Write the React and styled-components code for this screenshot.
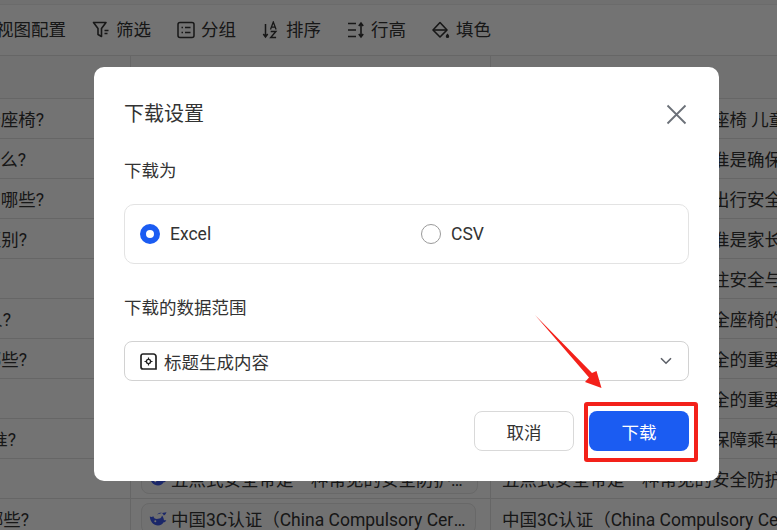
import React from "react";
import styled, { createGlobalStyle } from "styled-components";

const Global = createGlobalStyle`
  html, body { margin: 0; padding: 0; height: 100%; background: #fff; overflow: hidden; }
  body { font-family: Roboto, "Noto Sans CJK SC", sans-serif; color: #333; }
  * { box-sizing: border-box; }
`;

const Page = styled.div`
  position: relative;
  width: 777px;
  height: 530px;
  overflow: hidden;
  background: #f8f8f8;
  font-size: 17.5px;
`;

const Toolbar = styled.div`
  display: flex;
  align-items: center;
  gap: 25.5px;
  height: 52px;
  margin-left: -4px;
  position: relative;
  top: 4px;
  background: #fff;
  border-top: 1px solid #eee;
  border-bottom: 1px solid #e2e2e2;
`;

const ToolItem = styled.div`
  display: flex;
  align-items: center;
  gap: 6.5px;
  white-space: nowrap;
  line-height: 24px;
  color: #333;
`;

const HeaderRow = styled.div`
  display: grid;
  grid-template-columns: 131px 360px 1fr;
  height: 43px;
  margin-top: 4px;
  background: #fafafa;
  border-bottom: 1px solid #e2e2e2;
`;

const Row = styled.div`
  display: grid;
  grid-template-columns: 131px 360px 1fr;
  height: 40px;
  background: #fff;
  border-bottom: 1px solid #e2e2e2;
`;

const LeadCell = styled.div`
  display: flex;
  align-items: center;
  justify-content: flex-end;
  overflow: hidden;
  white-space: nowrap;
  border-right: 1px solid #e2e2e2;
  padding-right: ${(p) => p.$inset}px;
`;

const HeadCell = styled.div`
  border-right: 1px solid #e2e2e2;
`;

const ChipCell = styled.div`
  padding: 4px 12px 0 10px;
  border-right: 1px solid #e2e2e2;
  min-width: 0;
`;

const Chip = styled.div`
  display: flex;
  align-items: center;
  gap: 4px;
  height: 31px;
  padding: 0 7px 0 7px;
  border: 1px solid #e6e6e6;
  border-radius: 8px;
  background: #fafafa;
  width: ${(p) => p.$w}px;
`;

const ChipText = styled.span`
  flex: 1;
  min-width: 0;
  overflow: hidden;
  white-space: nowrap;
  text-overflow: ellipsis;
`;

const TextCell = styled.div`
  display: flex;
  align-items: center;
  overflow: hidden;
  white-space: nowrap;
  padding-left: 11px;
`;

const Overlay = styled.div`
  position: absolute;
  inset: 0;
  background: rgba(0, 0, 0, 0.55);
`;

const Dialog = styled.div`
  position: absolute;
  left: 94px;
  top: 67px;
  width: 625px;
  height: 414px;
  background: #fff;
  border-radius: 10px;
  padding: 33px 30px 30px;
  display: flex;
  flex-direction: column;
  color: #333;
`;

const DialogHead = styled.div`
  display: flex;
  align-items: center;
  justify-content: space-between;
  height: 28px;
  padding-right: 32px;
`;

const Title = styled.div`
  font-size: 20px;
  line-height: 28px;
`;

const CloseBtn = styled.button`
  all: unset;
  display: flex;
  width: 21px;
  height: 21px;
  margin-right: -30px;
  color: #6b7078;
`;

const Label = styled.div`
  font-size: 17.5px;
  line-height: 24px;
  margin-top: ${(p) => p.$top}px;
`;

const RadioCard = styled.div`
  margin-top: 21px;
  height: 60px;
  border: 1px solid #e3e3e3;
  border-radius: 10px;
  display: grid;
  grid-template-columns: 281px 1fr;
  align-items: center;
  padding-left: 15px;
`;

const RadioOption = styled.label`
  display: flex;
  align-items: center;
  gap: 10px;
`;

const RadioDot = styled.span`
  width: 20px;
  height: 20px;
  border-radius: 50%;
  background: #fff;
  border: ${(p) => (p.$on ? "6px solid #1b5cf2" : "1px solid #9a9a9a")};
`;

const SelectBox = styled.div`
  margin-top: 21px;
  height: 40px;
  border: 1px solid #d2d2d2;
  border-radius: 8px;
  display: flex;
  align-items: center;
  gap: 7px;
  padding: 0 15px;
`;

const SelectText = styled.span`
  flex: 1;
`;

const Actions = styled.div`
  margin-top: 30px;
  display: flex;
  justify-content: flex-end;
  gap: 15px;
`;

const CancelBtn = styled.button`
  width: 100px;
  height: 40px;
  border-radius: 8px;
  border: 1px solid #d9d9d9;
  background: #fff;
  color: #333;
  font: inherit;
  font-size: 17.5px;
`;

const PrimaryWrap = styled.div`
  position: relative;
`;

const PrimaryBtn = styled.button`
  display: block;
  width: 100px;
  height: 40px;
  border-radius: 8px;
  border: none;
  background: #1b5cf2;
  color: #fff;
  font: inherit;
  font-size: 17.5px;
`;

const RedFrame = styled.div`
  position: absolute;
  left: -5px;
  right: -9px;
  top: -9px;
  bottom: -11px;
  border: 4px solid #f3211a;
  border-radius: 3px;
`;

const Arrow = styled.svg`
  position: absolute;
  left: 436px;
  top: 244px;
`;

const FilterIcon = () => (
  <svg width="18" height="18" viewBox="0 0 18 18" fill="none" stroke="currentColor" strokeWidth="1.6">
    <path d="M1.5 1.5h12.5L9.5 7.5V15.5L6 13.5V7.5z" strokeLinejoin="round" />
    <path d="M12.5 9.5h4M12.5 12.5h3" />
  </svg>
);
const GroupIcon = () => (
  <svg width="18" height="18" viewBox="0 0 18 18" fill="none" stroke="currentColor" strokeWidth="1.5">
    <rect x="1" y="1.5" width="16" height="15" rx="2" />
    <path d="M4.5 6.5h1.5M4.5 11.5h1.5M8 6.5h5.5M8 11.5h5.5" />
  </svg>
);
const SortIcon = () => (
  <svg width="18" height="18" viewBox="0 0 18 18" fill="none" stroke="currentColor" strokeWidth="1.5">
    <path d="M3.5 3v13M1.3 13l2.2 3 2.2-3" />
    <path d="M8.5 8.5l2.8-7.5 2.8 7.5M9.6 6.2h3.4" strokeWidth="1.3" />
    <path d="M8.7 10.5h5.2l-5.2 6h5.4" strokeWidth="1.4" />
  </svg>
);
const HeightIcon = () => (
  <svg width="18" height="18" viewBox="0 0 18 18" fill="none" stroke="currentColor" strokeWidth="1.6">
    <path d="M1 2.5h8M1 9h8M1 15.5h8" />
    <path d="M14 2.5v13M11.8 5l2.2-3 2.2 3M11.8 13l2.2 3 2.2-3" />
  </svg>
);
const FillIcon = () => (
  <svg width="18" height="18" viewBox="0 0 18 18" fill="none" stroke="currentColor" strokeWidth="1.6">
    <path d="M8 1.5L1 9l7 7 7-7z" strokeLinejoin="round" />
    <path d="M1.5 9h13" />
    <path d="M15.5 12.5c1 1.3 1.7 2 1.7 2.9a1.7 1.7 0 0 1-3.4 0c0-.9.7-1.6 1.7-2.9z" fill="currentColor" stroke="none" />
  </svg>
);
const WhaleIcon = () => (
  <svg width="18" height="16" viewBox="0 0 18 16" fill="#3d58e8" style={{ flex: "none" }}>
    <path d="M.8 5.5C1 10.5 4.6 14.5 9 14.5c2.8 0 4.6-1.4 5.6-3.2 1.2-.1 2.3-.8 2.7-2.1-1 .3-1.8.2-2.4-.3-.2-1.6-.7-3.2-1.9-4.5-.3 1.6-1.2 2.6-2.6 3.1C8 8.2 5.4 8.5 4.3 5.2 3.5 6 2.1 6.2.8 5.5z" />
    <path d="M8 3.5c1.5-1.4 3.5-2 5-1.5l4.5-.7c-.4 1.4-1.4 2.6-2.7 3.2-.4-1.2-1-2-2-2.6-1.3.5-3 .9-4.8 1.6z" />
    <circle cx="6.3" cy="10.2" r="1" fill="#fff" />
  </svg>
);
const CloseIcon = () => (
  <svg width="21" height="21" viewBox="0 0 21 21" fill="none" stroke="currentColor" strokeWidth="1.8">
    <path d="M1.5 1.5l18 18M19.5 1.5l-18 18" />
  </svg>
);
const ContentIcon = () => (
  <svg width="17" height="17" viewBox="0 0 17 17" fill="none" stroke="#222" strokeWidth="1.7" style={{ flex: "none" }}>
    <path d="M3 1h10.5A2.5 2.5 0 0 1 16 3.5V16H3a2 2 0 0 1-2-2V3a2 2 0 0 1 2-2z" />
    <circle cx="8.5" cy="8.5" r="2.1" strokeWidth="1.4" />
    <path d="M8.5 4.5v1.5M8.5 11v1.5M4.5 8.5h1.5M11 8.5h1.5" strokeWidth="1.2" />
  </svg>
);
const Chevron = () => (
  <svg width="12" height="8" viewBox="0 0 12 8" fill="none" stroke="#5c6068" strokeWidth="1.6" style={{ flex: "none", marginRight: 1 }}>
    <path d="M1 1.2l5 5 5-5" />
  </svg>
);

const tools = [
  { label: "视图配置" },
  { label: "筛选", Icon: FilterIcon },
  { label: "分组", Icon: GroupIcon },
  { label: "排序", Icon: SortIcon },
  { label: "行高", Icon: HeightIcon },
  { label: "填色", Icon: FillIcon },
];

const rows = [
  { lead: "全座椅?", inset: 86, text: "如何选择适合孩子的儿童安座椅 儿童安全座椅" },
  { lead: "什么?", inset: 104, text: "儿童安全座椅的国家安全标准是确保儿童乘车" },
  { lead: "有哪些?", inset: 86, text: "选择安全座椅对保障孩子的出行安全至关重要" },
  { lead: "区别?", inset: 103, text: "不同国家的安全座椅认证标准是家长选购时的" },
  { lead: "", inset: 0, text: "在选购儿童座椅时，您应关注安全与惯性保护" },
  { lead: "人?", inset: 119, text: "ISOFIX接口是现代的儿童安全座椅的标准配置" },
  { lead: "哪些?", inset: 103, text: "了解各类认证有助于理解安全的重要性和意义" },
  { lead: "", inset: 0, text: "了解各类认证有助于理解安全的重要性和意义" },
  { lead: "标准?", inset: 114, text: "安全带与座椅约束系统用于保障乘车儿童安全" },
  { lead: "", inset: 0, chip: "五点式安全带是一种常见的安全防护装置，能够有效保护", w: 337, text: "五点式安全带是一种常见的安全防护措施，能够" },
  { lead: "哪些?", inset: 101, chip: "中国3C认证（China Compulsory Certification）", w: 335, text: "中国3C认证（China Compulsory Certification）" },
];

export default function App() {
  return (
    <Page>
      <Global />
      <Toolbar>
        {tools.map(({ label, Icon }) => (
          <ToolItem key={label}>
            {Icon && <Icon />}
            {label}
          </ToolItem>
        ))}
      </Toolbar>
      <HeaderRow>
        <HeadCell />
        <HeadCell />
        <div />
      </HeaderRow>
      {rows.map((r) => (
        <Row key={r.text + r.lead}>
          <LeadCell $inset={r.inset}>{r.lead}</LeadCell>
          <ChipCell>
            {r.chip && (
              <Chip $w={r.w}>
                <WhaleIcon />
                <ChipText>{r.chip}</ChipText>
              </Chip>
            )}
          </ChipCell>
          <TextCell>{r.text}</TextCell>
        </Row>
      ))}
      <Overlay>
        <Dialog>
          <DialogHead>
            <Title>下载设置</Title>
            <CloseBtn aria-label="关闭">
              <CloseIcon />
            </CloseBtn>
          </DialogHead>
          <Label $top={31}>下载为</Label>
          <RadioCard>
            <RadioOption>
              <RadioDot $on />
              Excel
            </RadioOption>
            <RadioOption>
              <RadioDot />
              CSV
            </RadioOption>
          </RadioCard>
          <Label $top={32}>下载的数据范围</Label>
          <SelectBox>
            <ContentIcon />
            <SelectText>标题生成内容</SelectText>
            <Chevron />
          </SelectBox>
          <Actions>
            <CancelBtn>取消</CancelBtn>
            <PrimaryWrap>
              <PrimaryBtn>下载</PrimaryBtn>
              <RedFrame />
            </PrimaryWrap>
          </Actions>
          <Arrow width="72" height="80" viewBox="0 0 72 80">
            <path d="M5 4L62 62 66.5 60 71.5 77 55 71 59 66.5z" fill="#f3211a" />
          </Arrow>
        </Dialog>
      </Overlay>
    </Page>
  );
}
